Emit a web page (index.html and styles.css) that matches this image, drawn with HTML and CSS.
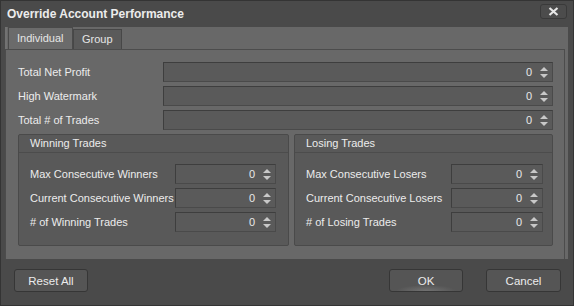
FILE: index.html
```html
<!DOCTYPE html>
<html lang="en">
<head>
  <meta charset="UTF-8">
  <title>Override Account Performance</title>
  <link rel="stylesheet" href="styles.css">
</head>
<body>
  <div class="window">
    <div class="titlebar">
      <span class="title">Override Account Performance</span>
      <button class="close" type="button">
        <svg width="11" height="9" viewBox="0 0 11 9"><path d="M1.5 1 L9.5 8 M9.5 1 L1.5 8" stroke="#e6e6e6" stroke-width="2.2"/></svg>
      </button>
    </div>

    <div class="tabs">
      <div class="tab-strip">
        <div class="tab active">Individual</div>
        <div class="tab">Group</div>
      </div>
      <div class="panel">
        <div class="field-row">
          <label>Total Net Profit</label>
          <div class="spin"><span>0</span><i class="arrows"></i></div>
        </div>
        <div class="field-row">
          <label>High Watermark</label>
          <div class="spin"><span>0</span><i class="arrows"></i></div>
        </div>
        <div class="field-row">
          <label>Total # of Trades</label>
          <div class="spin"><span>0</span><i class="arrows"></i></div>
        </div>

        <div class="groups">
          <div class="group win">
            <div class="group-head">Winning Trades</div>
            <div class="group-body">
              <div class="field-row">
                <label>Max Consecutive Winners</label>
                <div class="spin"><span>0</span><i class="arrows"></i></div>
              </div>
              <div class="field-row">
                <label>Current Consecutive Winners</label>
                <div class="spin"><span>0</span><i class="arrows"></i></div>
              </div>
              <div class="field-row">
                <label># of Winning Trades</label>
                <div class="spin"><span>0</span><i class="arrows"></i></div>
              </div>
            </div>
          </div>
          <div class="group lose">
            <div class="group-head">Losing Trades</div>
            <div class="group-body">
              <div class="field-row">
                <label>Max Consecutive Losers</label>
                <div class="spin"><span>0</span><i class="arrows"></i></div>
              </div>
              <div class="field-row">
                <label>Current Consecutive Losers</label>
                <div class="spin"><span>0</span><i class="arrows"></i></div>
              </div>
              <div class="field-row">
                <label># of Losing Trades</label>
                <div class="spin"><span>0</span><i class="arrows"></i></div>
              </div>
            </div>
          </div>
        </div>
      </div>
    </div>

    <div class="footer">
      <button type="button" class="btn">Reset All</button>
      <div class="spacer"></div>
      <button type="button" class="btn default">OK</button>
      <button type="button" class="btn">Cancel</button>
    </div>
  </div>
</body>
</html>
```

FILE: styles.css
```css
body {
  margin: 0;
  background: #4a4a4a;
  font-family: 'Liberation Sans', Arial, sans-serif;
  font-size: 11px;
  color: #ececec;
}

.window {
  width: 574px;
  height: 306px;
  box-sizing: border-box;
  border: 1px solid #343434;
  background: #4a4a4a;
  display: flex;
  flex-direction: column;
}

.titlebar {
  height: 26px;
  display: flex;
  align-items: center;
  padding: 0 6px;
}

.title {
  flex: 1;
  font-weight: bold;
  font-size: 12px;
  color: #ececec;
  margin-top: -1px;
}

.close {
  width: 27px;
  height: 15px;
  margin-top: -5px;
  padding: 0;
  border: 1px solid #3a3a3a;
  border-radius: 3px;
  background: #4c4c4c;
  display: flex;
  align-items: center;
  justify-content: center;
}

.tabs {
  margin: 0 5px 0 4px;
  background: #686868;
  height: 232px;
  display: flex;
  flex-direction: column;
}

.tab-strip {
  height: 22px;
  display: flex;
  align-items: flex-end;
  padding-left: 1px;
  border-left: 2px solid #727272;
}

.tab {
  height: 19px;
  line-height: 19px;
  padding: 0 8px;
  border: 1px solid #474747;
  border-bottom: none;
  background: #5a5a5a;
  color: #e6e6e6;
  font-size: 11px;
}

.tab.active {
  height: 21px;
  line-height: 21px;
  width: 47px;
  background: #6b6b6b;
  border-color: #4a4a4a;
}

.panel {
  flex: 1;
  margin-right: 3px;
  border: 1px solid #4c4c4c;
  border-bottom: none;
  padding: 12px 11px 0 12px;
  display: flex;
  flex-direction: column;
  gap: 4px;
}

.field-row {
  display: grid;
  grid-template-columns: 145px 1fr;
  align-items: center;
  height: 20px;
}

.field-row label {
  white-space: nowrap;
}

.spin {
  height: 20px;
  box-sizing: border-box;
  border: 1px solid #3e3e3e;
  border-right-color: #4a4a4a;
  border-bottom-color: #4a4a4a;
  background: #5a5a5a;
  display: flex;
  align-items: center;
  justify-content: flex-end;
  padding-right: 4px;
  color: #e8e8e8;
}

.spin span {
  margin-right: 8px;
}

.arrows {
  display: flex;
  flex-direction: column;
  justify-content: space-between;
  height: 11px;
  margin-top: 1px;
}

.arrows::before,
.arrows::after {
  content: "";
  width: 0;
  height: 0;
  border-left: 4px solid transparent;
  border-right: 4px solid transparent;
}

.arrows::before {
  border-bottom: 4px solid #c8c8c8;
}

.arrows::after {
  border-top: 4px solid #c8c8c8;
}

.groups {
  display: flex;
  gap: 5px;
}

.group {
  height: 112px;
  box-sizing: border-box;
  border: 1px solid #4a4a4a;
  border-radius: 2px;
  background: #595959;
}

.group.win {
  width: 271px;
}

.group.lose {
  width: 259px;
}

.group-head {
  height: 17px;
  line-height: 17px;
  padding-left: 11px;
  border-bottom: 1px solid #4c4c4c;
}

.group-body {
  padding: 11px 12px 0 11px;
  display: flex;
  flex-direction: column;
  gap: 4px;
}

.win .field-row {
  grid-template-columns: 145px 101px;
}

.lose .field-row {
  grid-template-columns: 145px 92px;
}

.footer {
  flex: 1;
  display: flex;
  align-items: flex-start;
  padding: 10px 12px 0 13px;
  gap: 23px;
}

.spacer {
  flex: 1;
}

.btn {
  width: 74px;
  height: 23px;
  border: 1px solid #363636;
  border-radius: 3px;
  background: #555;
  color: #ececec;
  font-family: inherit;
  font-size: 11.5px;
  padding: 0;
}

.btn.default {
  background: radial-gradient(ellipse 30px 6px at 50% 100%, #727272, #555);
}

.footer .btn:last-child {
  width: 75px;
}
```
